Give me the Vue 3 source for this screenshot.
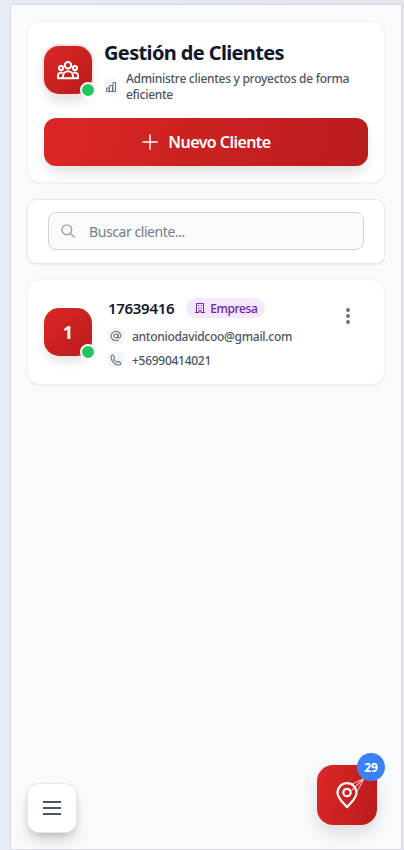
<script setup>
import { ref } from 'vue'

const search = ref('')
const clients = [
  { initial: '1', name: '17639416', type: 'Empresa', email: 'antoniodavidcoo@gmail.com', phone: '+56990414021' }
]
</script>

<template>
  <div class="page">
    <main class="panel">
      <section class="card header">
        <div class="heading">
          <div class="avatar ringed">
            <svg width="24" height="24" viewBox="0 0 24 24" fill="none" stroke="#fff" stroke-width="2" stroke-linejoin="round">
              <circle cx="12" cy="7.3" r="3.2" />
              <circle cx="5.1" cy="10" r="2.1" />
              <circle cx="18.9" cy="10" r="2.1" />
              <path d="M7 20.200v-2a5 5 0 0 1 10 0v2zM7 20.200H2v-2.400a3.300 3.300 0 0 1 4.800-3M17 20.200h5v-2.400a3.300 3.300 0 0 0-4.800-3" />
            </svg>
            <span class="online"></span>
          </div>
          <div class="titles">
            <h1>Gestión de Clientes</h1>
            <div class="subtitle">
              <span class="chip stat">
                <svg width="12" height="12" viewBox="0 0 12 12" fill="none" stroke="#6b7280" stroke-width="1" stroke-linejoin="round">
                  <path d="M1.500 10.500V7H4v3.500M4.500 10.500V4.500H7.500v6M8 10.500V1.500h2.500v9M1.500 10.500h9" />
                </svg>
              </span>
              <p>Administre clientes y proyectos de forma eficiente</p>
            </div>
          </div>
        </div>
        <button class="primary">
          <svg width="16" height="16" viewBox="0 0 16 16" fill="none" stroke="#fff" stroke-width="1.5" stroke-linecap="round"><path d="M8 1v14M1 8h14" /></svg>
          <span>Nuevo Cliente</span>
        </button>
      </section>

      <section class="searchbox">
        <label class="field">
          <svg width="14" height="14" viewBox="0 0 14 14" fill="none" stroke="#9ca3af" stroke-width="1.4" stroke-linecap="round"><circle cx="5.8" cy="5.8" r="4.9" /><path d="M9.500 9.500l3.800 3.800" /></svg>
          <input v-model="search" type="text" placeholder="Buscar cliente..." />
        </label>
      </section>

      <section v-for="c in clients" :key="c.name" class="card client">
        <div class="avatar initial">{{ c.initial }}<span class="online"></span></div>
        <div class="details">
          <div class="namerow">
            <h2>{{ c.name }}</h2>
            <span class="tag">
              <svg width="12" height="12" viewBox="0 0 12 12" fill="none" stroke="#7e22ce" stroke-width="1">
                <path d="M2.500 10.500v-9h7v9M1 10.500h4v-2h2v2h4M4 3.500h1M7 3.500h1M5.500 5h1M4 6.500h1M7 6.500h1" />
              </svg>
              <span>{{ c.type }}</span>
            </span>
          </div>
          <div class="contact">
            <span class="chip">
              <svg width="12" height="12" viewBox="0 0 12 12" fill="none" stroke="#6b7280" stroke-width="1.05" stroke-linecap="round">
                <circle cx="6" cy="6" r="2.1" /><path d="M8.1 3.9v2.8c0 1.8 2.8 1.5 2.8-.7A4.900 4.700 0 1 0 8.6 10" />
              </svg>
            </span>
            <span class="email">{{ c.email }}</span>
          </div>
          <div class="contact">
            <span class="chip">
              <svg width="12" height="12" viewBox="0 0 12 12" fill="none" stroke="#6b7280" stroke-width="1.05" stroke-linejoin="round">
                <path d="M1.100 2.500c.2-.9.8-1.500 1.600-1.500.9.6 1.500 1.400 1.800 2.300 0 .5-.3.8-.8 1.300.3 1.300 1.900 3 3.500 3.600.5-.6.9-.9 1.400-.8.9.4 1.700 1 2.300 1.800 0 .8-.6 1.500-1.500 1.700C5.400 11.500.600 7 1.100 2.500z" />
              </svg>
            </span>
            <span class="phone">{{ c.phone }}</span>
          </div>
        </div>
        <button class="more" aria-label="Opciones"><i></i><i></i><i></i></button>
      </section>

      <button class="menu" aria-label="Menú"><i></i><i></i><i></i></button>
      <button class="locate" aria-label="Ubicaciones">
        <svg width="60" height="60" viewBox="0 0 60 60" fill="none" stroke="#fff">
          <path d="M47 13.500L34.500 19.500M47 13.500L40.500 26M47 13.500L35 25" stroke-width="1.100" opacity=".65" />
          <path d="M30 42.200C27 38.500 20.500 33.500 20.500 27.700a9.500 9.500 0 0 1 19 0C39.500 33.500 33 38.500 30 42.200z" stroke-width="2.200" stroke-linejoin="round" />
          <circle cx="30" cy="27.500" r="3.700" stroke-width="2.200" />
        </svg>
        <span class="count">29</span>
      </button>
    </main>
  </div>
</template>

<style>
body { margin: 0; }
</style>

<style scoped>
* { box-sizing: border-box; }
.page {
  height: 850px;
  padding: 4px 2px 0 10px;
  overflow: hidden;
  background: linear-gradient(90deg, #e9eef7, #e5e8f0);
  font-family: "Segoe UI", "Noto Sans", "Open Sans", sans-serif;
}
.panel {
  position: relative;
  height: 846px;
  padding: 16px;
  border: 1px solid #d9dce2;
  background: #f9fafc;
  box-shadow: 0 0 12px rgba(30, 41, 59, .05);
}
h1, h2, p { margin: 0; }
button { padding: 0; border: 0; font-family: inherit; }
svg { display: block; flex: none; }
.card {
  border: 1px solid #f1f2f5;
  border-radius: 13px;
  background: #fff;
  box-shadow: 0 1px 2px rgba(0, 0, 0, .05);
}
.header { height: 162px; padding: 17px 16px 16px; }
.heading { display: flex; gap: 12px; height: 79px; }
.avatar {
  position: relative;
  display: flex;
  flex: none;
  align-items: center;
  justify-content: center;
  width: 48px;
  height: 48px;
  border-radius: 15px;
  background: linear-gradient(135deg, #dc2626, #b91c1c);
  box-shadow: 0 7px 12px -2px rgba(0, 0, 0, .13);
}
.ringed { margin-top: 7px; box-shadow: 0 0 0 2px #fee2e2, 0 8px 12px -1px rgba(0, 0, 0, .13); }
.online {
  position: absolute;
  right: -4px;
  bottom: -4px;
  width: 16px;
  height: 16px;
  border: 2px solid #fff;
  border-radius: 50%;
  background: #22c55e;
}
h1 { height: 28px; font-size: 20px; line-height: 27px; font-weight: 700; letter-spacing: -.63px; color: #0f172a; white-space: nowrap; }
.subtitle { display: flex; align-items: center; gap: 8px; margin-top: 4px; }
.subtitle p { width: 236px; font-size: 12px; line-height: 16px; font-weight: 500; letter-spacing: -.28px; color: #4b5563; }
.chip {
  display: flex;
  flex: none;
  align-items: center;
  justify-content: center;
  width: 16px;
  height: 16px;
  border-radius: 4px;
  background: #f3f4f6;
}
.stat { width: 14px; }
.primary {
  display: flex;
  align-items: center;
  justify-content: center;
  gap: 10px;
  width: 100%;
  height: 48px;
  border-radius: 12px;
  background: linear-gradient(105deg, #dc2626, #b91c1c);
  box-shadow: 0 8px 14px -2px rgba(0, 0, 0, .13);
  color: #fff;
  font-size: 16px;
  font-weight: 600;
  letter-spacing: -.55px;
}
.primary svg { margin-left: 1px; }
.searchbox {
  height: 65px;
  margin-top: 16px;
  padding: 12px 20px;
  border: 1px solid #e5e7eb;
  border-radius: 9px;
  background: #fff;
  box-shadow: 0 1px 2px rgba(0, 0, 0, .06);
}
.field {
  display: flex;
  align-items: center;
  gap: 14px;
  height: 38px;
  padding: 0 12px;
  border: 1px solid #d1d5db;
  border-radius: 8px;
  background: #f9fafb;
}
input {
  flex: 1;
  min-width: 0;
  padding: 0;
  border: 0;
  outline: 0;
  background: transparent;
  color: #374151;
  font-family: inherit;
  font-size: 14px;
  letter-spacing: -.5px;
}
input::placeholder { color: #757d89; opacity: 1; }
input { letter-spacing: -.43px; }
.client { display: flex; height: 106px; margin-top: 15px; padding: 18px 16px; }
.initial { margin-top: 10px; color: #fff; font-size: 18px; font-weight: 700; }
.details { flex: 1; min-width: 0; margin-left: 16px; }
.namerow { display: flex; align-items: center; gap: 12px; height: 20px; margin-bottom: 10px; }
h2 { font-size: 15px; line-height: 20px; font-weight: 600; letter-spacing: -.3px; color: #111827; }
.tag {
  display: flex;
  align-items: center;
  gap: 4px;
  height: 20px;
  padding: 0 8px;
  border-radius: 10px;
  background: #f3e8ff;
  color: #6b21a8;
  font-size: 12px;
  font-weight: 500;
  letter-spacing: -.4px;
}
.contact { display: flex; align-items: center; gap: 8px; height: 16px; margin-bottom: 8px; color: #4b5563; font-size: 12px; font-weight: 500; letter-spacing: -.28px; }
.more { display: flex; flex-direction: column; align-items: center; gap: 2px; width: 40px; padding-top: 10px; background: transparent; }
.more i { width: 4px; height: 4px; border-radius: 50%; background: #6b7280; }
.menu {
  position: absolute;
  left: 16px;
  bottom: 16px;
  display: flex;
  flex-direction: column;
  align-items: center;
  justify-content: center;
  gap: 4px;
  width: 50px;
  height: 50px;
  border: 1px solid #e5e7eb;
  border-radius: 12px;
  background: #fff;
  box-shadow: 0 9px 15px -3px rgba(0, 0, 0, .18), 0 3px 6px -2px rgba(0, 0, 0, .16);
}
.menu i { width: 18px; height: 2px; background: #4b5563; }
.locate {
  position: absolute;
  right: 24px;
  bottom: 24px;
  width: 60px;
  height: 60px;
  border-radius: 16px;
  background: linear-gradient(105deg, #dc2626, #b91c1c);
  box-shadow: 0 8px 16px rgba(0, 0, 0, .12);
}
.count {
  position: absolute;
  top: -12px;
  right: -8px;
  width: 28px;
  height: 28px;
  border-radius: 50%;
  background: #3b82f6;
  color: #fff;
  font-size: 12px;
  line-height: 29px;
  font-weight: 700;
  text-align: center;
}
</style>
